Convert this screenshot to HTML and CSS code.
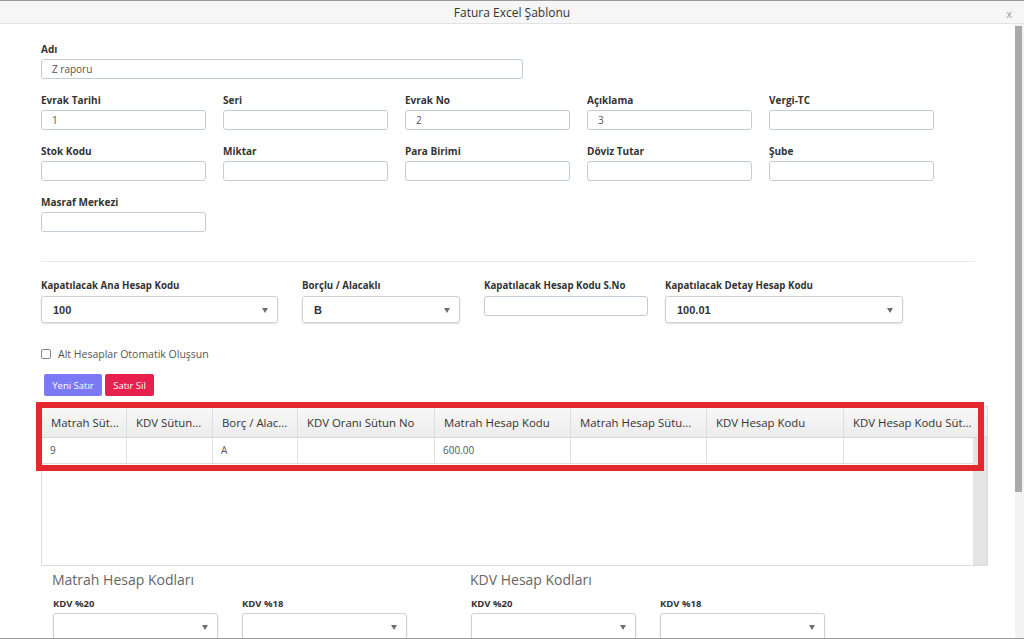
FILE: index.html
```html
<!DOCTYPE html>
<html lang="tr">
<head>
    <meta charset="UTF-8">
    <title>Fatura Excel Şablonu</title>
    <link rel="stylesheet" href="styles.css">
</head>
<body>
<div class="modal">
    <div class="modal-header">
        <span class="modal-title">Fatura Excel Şablonu</span>
        <span class="close">x</span>
    </div>
    <div class="modal-body">
        <div class="content">
            <div class="form-group">
                <label>Adı</label>
                <div class="input wide">Z raporu</div>
            </div>

            <div class="form-grid">
                <div class="form-group"><label>Evrak Tarihi</label><div class="input">1</div></div>
                <div class="form-group"><label>Seri</label><div class="input"></div></div>
                <div class="form-group"><label>Evrak No</label><div class="input">2</div></div>
                <div class="form-group"><label>Açıklama</label><div class="input">3</div></div>
                <div class="form-group"><label>Vergi-TC</label><div class="input"></div></div>

                <div class="form-group"><label>Stok Kodu</label><div class="input"></div></div>
                <div class="form-group"><label>Miktar</label><div class="input"></div></div>
                <div class="form-group"><label>Para Birimi</label><div class="input"></div></div>
                <div class="form-group"><label>Döviz Tutar</label><div class="input"></div></div>
                <div class="form-group"><label>Şube</label><div class="input"></div></div>

                <div class="form-group"><label>Masraf Merkezi</label><div class="input"></div></div>
            </div>

            <hr class="divider">

            <div class="account-row">
                <div class="form-group w-ana">
                    <label>Kapatılacak Ana Hesap Kodu</label>
                    <div class="select"><span>100</span><i class="caret"></i></div>
                </div>
                <div class="form-group w-ba">
                    <label>Borçlu / Alacaklı</label>
                    <div class="select"><span>B</span><i class="caret"></i></div>
                </div>
                <div class="form-group w-sno">
                    <label>Kapatılacak Hesap Kodu S.No</label>
                    <div class="input"></div>
                </div>
                <div class="form-group w-detay">
                    <label>Kapatılacak Detay Hesap Kodu</label>
                    <div class="select"><span>100.01</span><i class="caret"></i></div>
                </div>
            </div>

            <div class="check-row">
                <span class="checkbox"></span>
                <span>Alt Hesaplar Otomatik Oluşsun</span>
            </div>

            <div class="buttons">
                <button class="btn btn-new">Yeni Satır</button>
                <button class="btn btn-del">Satır Sil</button>
            </div>

            <div class="grid-wrap">
                <div class="grid">
                    <div class="grid-head">
                        <div class="cell c1">Matrah Süt...</div>
                        <div class="cell c2">KDV Sütun...</div>
                        <div class="cell c3">Borç / Alac...</div>
                        <div class="cell c4">KDV Oranı Sütun No</div>
                        <div class="cell c5">Matrah Hesap Kodu</div>
                        <div class="cell c6">Matrah Hesap Sütu...</div>
                        <div class="cell c7">KDV Hesap Kodu</div>
                        <div class="cell c8">KDV Hesap Kodu Süt...</div>
                    </div>
                    <div class="grid-body">
                        <div class="grid-rows">
                            <div class="grid-row">
                                <div class="cell c1">9</div>
                                <div class="cell c2"></div>
                                <div class="cell c3">A</div>
                                <div class="cell c4"></div>
                                <div class="cell c5">600.00</div>
                                <div class="cell c6"></div>
                                <div class="cell c7"></div>
                                <div class="cell c8"></div>
                            </div>
                        </div>
                        <div class="grid-scroll"></div>
                    </div>
                </div>
                <div class="highlight"></div>
            </div>

            <div class="codes">
                <div class="code-col">
                    <h4>Matrah Hesap Kodları</h4>
                    <div class="code-fields">
                        <div class="form-group"><label>KDV %20</label><div class="select"><span></span><i class="caret"></i></div></div>
                        <div class="form-group"><label>KDV %18</label><div class="select"><span></span><i class="caret"></i></div></div>
                    </div>
                </div>
                <div class="code-col">
                    <h4>KDV Hesap Kodları</h4>
                    <div class="code-fields">
                        <div class="form-group"><label>KDV %20</label><div class="select"><span></span><i class="caret"></i></div></div>
                        <div class="form-group"><label>KDV %18</label><div class="select"><span></span><i class="caret"></i></div></div>
                    </div>
                </div>
            </div>
        </div>
        <div class="vscroll"><div class="vthumb"></div></div>
    </div>
</div>
</body>
</html>
```

FILE: styles.css
```css
html, body {
    margin: 0;
    padding: 0;
    background: #fff;
}
body {
    font-family: 'Open Sans', sans-serif;
    color: #333;
    overflow: hidden;
}
.modal {
    width: 1024px;
    height: 639px;
    box-sizing: border-box;
    border-top: 1px solid #9a9a9a;
    border-bottom: 1px solid #9a9a9a;
    overflow: hidden;
}
.modal-header {
    position: relative;
    height: 22px;
    background: #f6f6f6;
    border-bottom: 1px solid #e2e2e2;
    text-align: center;
    font-size: 12px;
    line-height: 24px;
    color: #333;
}
.close {
    position: absolute;
    right: 12px;
    top: 1px;
    color: #999;
    font-size: 11px;
}
.modal-body {
    display: flex;
    height: 614px;
}
.content {
    flex: 1;
    padding: 19px 0 0 41px;
    overflow: hidden;
}
.vscroll {
    width: 9px;
    background: #f3f3f3;
    padding-top: 2px;
}
.vthumb {
    width: 7px;
    height: 466px;
    background: #a9a9a9;
}

/* form */
.form-group {
    margin-bottom: 15px;
}
.form-group label {
    display: block;
    font-size: 10px;
    font-weight: bold;
    line-height: 13px;
    margin-bottom: 3px;
    color: #333;
}
.input {
    box-sizing: border-box;
    width: 165px;
    height: 20px;
    border: 1px solid #c2ccd6;
    border-radius: 3px;
    padding: 0 10px;
    font-size: 10px;
    line-height: 18px;
    color: #555;
}
.input.wide {
    width: 482px;
}
.form-grid {
    display: grid;
    grid-template-columns: repeat(5, 165px);
    column-gap: 17px;
}
.divider {
    width: 934px;
    margin: 14px 0 17px 0;
    border: 0;
    border-top: 1px solid #e8e8e8;
}

.account-row {
    display: flex;
}
.account-row .form-group {
    margin-right: 24px;
    margin-bottom: 0;
}
.account-row label {
    font-size: 9.7px;
    margin-bottom: 4px;
}
.w-ana .select { width: 237px; }
.w-ba .select { width: 158px; }
.w-sno { margin-right: 17px !important; }
.w-sno .input { width: 164px; }
.w-detay .select { width: 238px; }

.select {
    position: relative;
    box-sizing: border-box;
    width: 165px;
    height: 27px;
    border: 1px solid #cfcfcf;
    border-radius: 3px;
    box-shadow: 0 1px 2px rgba(0, 0, 0, 0.12);
    padding: 0 11px;
    font-family: 'Liberation Sans', Arial, sans-serif;
    font-size: 11px;
    font-weight: bold;
    line-height: 26px;
    color: #333;
}
.caret {
    position: absolute;
    right: 9px;
    top: 11px;
    width: 0;
    height: 0;
    border-left: 3px solid transparent;
    border-right: 3px solid transparent;
    border-top: 5px solid #6f6f6f;
}

.check-row {
    display: flex;
    align-items: center;
    margin-top: 24px;
    font-size: 10.5px;
    color: #555;
}
.checkbox {
    width: 8px;
    height: 8px;
    border: 1px solid #888;
    border-radius: 2px;
    margin-right: 7px;
}

.buttons {
    display: flex;
    gap: 3px;
    margin: 13px 0 0 3px;
}
.btn {
    height: 22px;
    border: 0;
    border-radius: 2px;
    padding: 0;
    color: #fff;
    font-family: 'Open Sans', sans-serif;
    font-size: 9.5px;
}
.btn-new {
    width: 58px;
    background: #7b79f6;
}
.btn-del {
    width: 49px;
    background: #e8204e;
}

/* grid */
.grid-wrap {
    position: relative;
    margin-top: 10px;
    width: 947px;
}
.grid {
    box-sizing: border-box;
    height: 160px;
    border: 1px solid #dcdcdc;
    display: flex;
    flex-direction: column;
}
.grid-head {
    display: flex;
    height: 30px;
    background: linear-gradient(#f8f8f8, #ececec);
    border-bottom: 1px solid #d6d6d6;
    font-size: 11.4px;
    color: #333;
}
.grid-body {
    flex: 1;
    display: flex;
}
.grid-rows {
    flex: 1;
}
.grid-row {
    display: flex;
    height: 25px;
    border-bottom: 1px solid #dedede;
    font-size: 10px;
    color: #555;
}
.grid-scroll {
    width: 14px;
    background: #e4e4e4;
}
.cell {
    box-sizing: border-box;
    border-right: 1px solid #dedede;
    padding: 0 4px 0 8px;
    white-space: nowrap;
    overflow: hidden;
}
.grid-head .cell {
    line-height: 29px;
    padding-top: 1px;
    padding-left: 9px;
}
.grid-row .cell {
    line-height: 25px;
}
.c1 { width: 85px; }
.c2 { width: 86px; }
.c3 { width: 85px; }
.c4 { width: 137px; }
.c5 { width: 136px; }
.c6 { width: 136px; }
.c7 { width: 137px; }
.c8 { width: 129px; }
.grid-head .c8 { width: 143px; border-right: 0; }
.grid-row .c8 { border-right: 0; }
.highlight {
    position: absolute;
    left: -5px;
    top: -4px;
    width: 948px;
    height: 69px;
    box-sizing: border-box;
    border: 6px solid #e5282d;
}

.codes {
    display: grid;
    grid-template-columns: 418px 418px;
    padding-left: 11px;
    margin-top: 4px;
}
.codes h4 {
    margin: 0 0 8px 0;
    font-size: 14px;
    font-weight: normal;
    line-height: 19px;
    color: #666;
}
.code-fields {
    display: flex;
    gap: 24px;
    padding-left: 1px;
}
.code-fields label {
    font-size: 9.5px;
}
```
